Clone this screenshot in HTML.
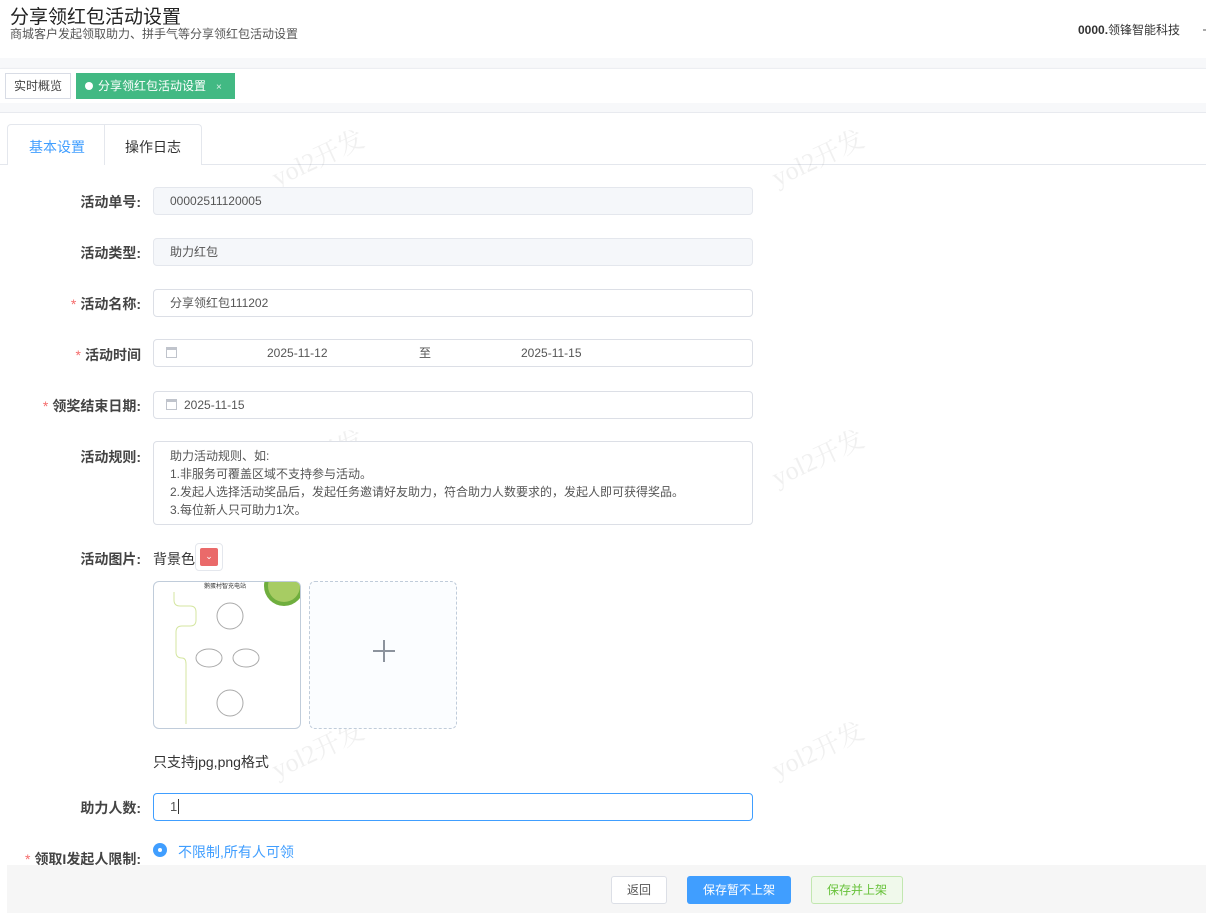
<!DOCTYPE html>
<html><head><meta charset="utf-8">
<style>
*{box-sizing:border-box;margin:0;padding:0}
body{width:1206px;height:916px;overflow:hidden;background:#fff;font-family:"Liberation Sans","Noto Sans CJK SC",sans-serif;color:#333;position:relative}
.abs{position:absolute}
.lbl{position:absolute;right:1065px;font-size:14px;color:#444;font-weight:600;text-align:right;white-space:nowrap}
.lbl b{color:#f56c6c;font-weight:normal;margin-right:4px}
.inp{position:absolute;left:153px;width:600px;height:28px;border:1px solid #dcdfe6;border-radius:4px;font-size:12px;color:#555;padding-left:16px;line-height:26px;background:#fff}
.dis{background:#f5f7fa;border-color:#e4e7ed}
.wm{position:absolute;font-size:26px;color:rgba(0,0,0,0.06);transform:rotate(-25deg);font-family:"Liberation Serif","Noto Serif CJK SC",serif}
.cal{position:absolute;width:11px;height:11px;border:1px solid #c0c4cc;border-top-width:3px;top:7px}
</style></head><body>
<div class="abs" style="left:10px;top:2px;font-size:19px;color:#222">分享领红包活动设置</div>
<div class="abs" style="left:10px;top:25px;font-size:12px;color:#555">商城客户发起领取助力、拼手气等分享领红包活动设置</div>
<div class="abs" style="left:1078px;top:21px;font-size:12px;color:#333"><span style="font-weight:bold">0000.</span>领锋智能科技</div>
<div class="abs" style="left:1203px;top:29px;width:3px;height:2px;background:#aaa"></div>
<div class="abs" style="left:0;top:58px;width:1206px;height:10px;background:#f7f8fa"></div>
<div class="abs" style="left:0;top:68px;width:1206px;height:35px;background:#fff;border-top:1px solid #eceef2;box-shadow:0 2px 3px rgba(0,0,0,0.12)"></div>
<div class="abs" style="left:0;top:103px;width:1206px;height:10px;background:#f7f8fa;border-bottom:1px solid #e8eaef"></div>
<div class="abs" style="left:5px;top:73px;width:66px;height:26px;border:1px solid #d8dce5;font-size:12px;color:#444;line-height:24px;text-align:center">实时概览</div>
<div class="abs" style="left:76px;top:73px;width:159px;height:26px;background:#42b983;color:#fff;font-size:12px;line-height:26px;padding-left:9px"><span style="display:inline-block;width:8px;height:8px;border-radius:50%;background:#fff;margin-right:5px"></span>分享领红包活动设置<span style="font-size:10px;margin-left:10px;opacity:.8">×</span></div>
<div class="abs" style="left:0;top:164px;width:1206px;height:1px;background:#e4e7ed"></div>
<div class="abs" style="left:7px;top:124px;width:195px;height:41px;border:1px solid #e4e7ed;border-bottom:none;border-radius:4px 4px 0 0;background:#fff"></div>
<div class="abs" style="left:104px;top:124px;width:1px;height:41px;background:#e4e7ed"></div>
<div class="abs" style="left:8px;top:164px;width:96px;height:2px;background:#fff"></div>
<div class="abs" style="left:29px;top:137px;font-size:14px;color:#409eff">基本设置</div>
<div class="abs" style="left:125px;top:137px;font-size:14px;color:#333">操作日志</div>
<div class="wm" style="left:268px;top:138px">yol2开发</div>
<div class="wm" style="left:768px;top:138px">yol2开发</div>
<div class="wm" style="left:268px;top:438px">yol2开发</div>
<div class="wm" style="left:768px;top:438px">yol2开发</div>
<div class="wm" style="left:268px;top:730px">yol2开发</div>
<div class="wm" style="left:768px;top:730px">yol2开发</div>

<div class="lbl" style="top:192px">活动单号:</div>
<div class="inp dis" style="top:187px">00002511120005</div>
<div class="lbl" style="top:243px">活动类型:</div>
<div class="inp dis" style="top:238px">助力红包</div>
<div class="lbl" style="top:294px"><b>*</b>活动名称:</div>
<div class="inp" style="top:289px">分享领红包111202</div>
<div class="lbl" style="top:345px"><b>*</b>活动时间</div>
<div class="inp" style="top:339px"><span class="cal" style="left:12px"></span><span class="abs" style="left:113px">2025-11-12</span><span class="abs" style="left:265px">至</span><span class="abs" style="left:367px">2025-11-15</span></div>
<div class="lbl" style="top:396px"><b>*</b>领奖结束日期:</div>
<div class="inp" style="top:391px;padding-left:30px"><span class="cal" style="left:12px"></span>2025-11-15</div>
<div class="lbl" style="top:447px">活动规则:</div>
<div class="inp" style="top:441px;height:84px;line-height:18px;padding-top:5px">助力活动规则、如:<br>1.非服务可覆盖区域不支持参与活动。<br>2.发起人选择活动奖品后，发起任务邀请好友助力，符合助力人数要求的，发起人即可获得奖品。<br>3.每位新人只可助力1次。</div>
<div class="lbl" style="top:549px">活动图片:</div>
<div class="abs" style="left:153px;top:549px;font-size:14px;color:#333">背景色</div>
<div class="abs" style="left:195px;top:543px;width:28px;height:28px;border:1px solid #e4e7ed;border-radius:4px;padding:4px"><div style="width:18px;height:18px;background:#ea6a6a;border-radius:2px;color:#fff;font-size:9px;text-align:center;line-height:16px">⌄</div></div>
<div class="abs" style="left:153px;top:581px;width:148px;height:148px;border:1px solid #c0ccda;border-radius:6px;overflow:hidden;background:#fff">
<svg width="148" height="148" viewBox="0 0 148 148">
<text x="50" y="6" font-size="6" fill="#333">鹅蛋村智充电站</text>
<path d="M20 10 v8 q0 6 6 6 h10 q6 0 6 6 v8 q0 6 -6 6 h-8 q-6 0 -6 6 v20 q0 6 6 6 q4 0 4 6 v60" fill="none" stroke="#d4e6a0" stroke-width="1"/>
<circle cx="76" cy="34" r="13" fill="none" stroke="#aaa"/>
<ellipse cx="55" cy="76" rx="13" ry="9" fill="none" stroke="#aaa"/>
<ellipse cx="92" cy="76" rx="13" ry="9" fill="none" stroke="#aaa"/>
<circle cx="76" cy="121" r="13" fill="none" stroke="#aaa"/>
<circle cx="130" cy="4" r="20" fill="#6fae3e"/>
<circle cx="130" cy="4" r="16" fill="#a7cc63"/>
</svg></div>
<div class="abs" style="left:309px;top:581px;width:148px;height:148px;border:1px dashed #c0ccda;border-radius:6px;background:#fbfdff"><div class="abs" style="left:63px;top:68px;width:22px;height:2px;background:#8c939d"></div><div class="abs" style="left:73px;top:58px;width:2px;height:22px;background:#8c939d"></div></div>
<div class="abs" style="left:153px;top:752px;font-size:14px;color:#333">只支持jpg,png格式</div>
<div class="lbl" style="top:798px">助力人数:</div>
<div class="inp" style="top:793px;border-color:#409eff;font-size:13px">1<span style="border-left:1px solid #333;margin-left:1px"></span></div>
<div class="lbl" style="top:849px"><b>*</b>领取I发起人限制:</div>
<div class="abs" style="left:153px;top:843px;width:14px;height:14px;border-radius:50%;background:#409eff"><div style="margin:5px;width:4px;height:4px;border-radius:50%;background:#fff"></div></div>
<div class="abs" style="left:178px;top:842px;font-size:14px;color:#409eff">不限制,所有人可领</div>
<div class="abs" style="left:7px;top:865px;width:1199px;height:48px;background:#f6f6f6"></div>
<div class="abs" style="left:611px;top:876px;width:56px;height:28px;border:1px solid #dcdfe6;background:#fff;border-radius:3px;font-size:12px;line-height:26px;text-align:center;color:#555">返回</div>
<div class="abs" style="left:687px;top:876px;width:104px;height:28px;background:#409eff;border-radius:3px;font-size:12px;line-height:28px;text-align:center;color:#fff">保存暂不上架</div>
<div class="abs" style="left:811px;top:876px;width:92px;height:28px;background:#f0f9eb;border:1px solid #c2e7b0;border-radius:3px;font-size:12px;line-height:26px;text-align:center;color:#67c23a">保存并上架</div>
</body></html>
